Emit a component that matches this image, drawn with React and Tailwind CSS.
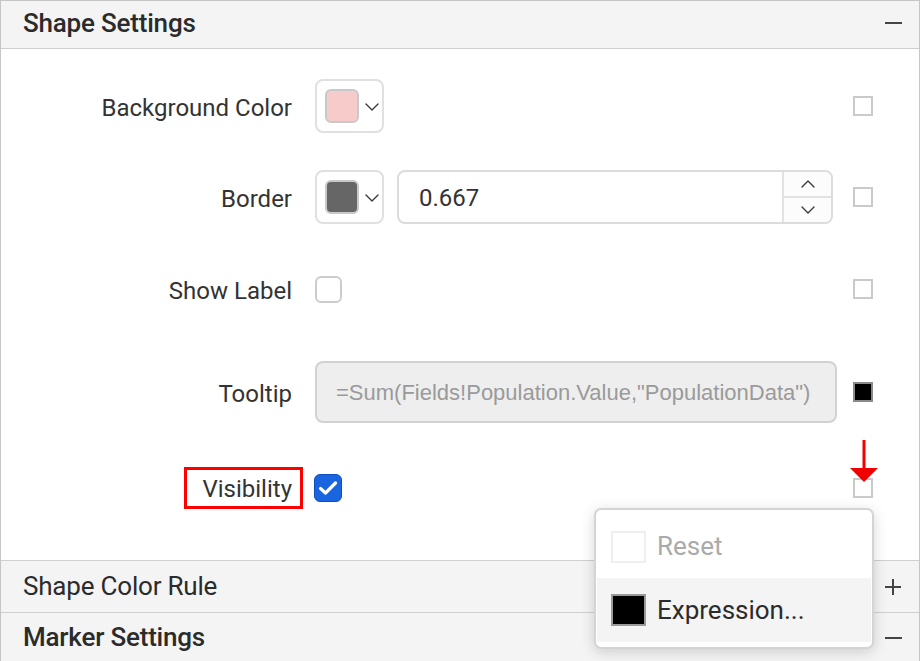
import React from "react";

const Chevron = ({ up = false, className = "" }) => (
  <svg width="14" height="8" viewBox="0 0 14 8" className={className} fill="none">
    <path
      d={up ? "M1 7L7 1L13 7" : "M1 1L7 7L13 1"}
      stroke="#3a3a3a"
      strokeWidth="1.4"
      strokeLinecap="round"
      strokeLinejoin="round"
    />
  </svg>
);

function ColorButton({ color }) {
  return (
    <div className="w-[69px] h-[54px] border-2 border-[#e0e0e0] rounded-[8px] flex items-center pl-[8px] bg-white">
      <div
        className="w-[34px] h-[34px] rounded-[6px] border-2 border-[#c9c9c9]"
        style={{ backgroundColor: color }}
      />
      <Chevron className="ml-[6px] mt-[2px]" />
    </div>
  );
}

function SideBox({ filled = false }) {
  return (
    <div
      className={
        filled
          ? "w-[20px] h-[20px] border-2 border-[#8a8a8a] bg-black"
          : "w-[20px] h-[20px] border-2 border-[#cacaca] bg-white"
      }
    />
  );
}

function Row({ label, height, mt, children, side, labelNode }) {
  return (
    <div className="flex items-center" style={{ height, marginTop: mt }}>
      <div className="w-[291px] flex justify-end text-[24px] text-[#333] pt-[3px]">
        {labelNode || <span>{label}</span>}
      </div>
      <div className="w-[522px] ml-[23px] flex items-center">{children}</div>
      <div className="ml-[16px]">{side}</div>
    </div>
  );
}

function Header({ title, bold, icon, className = "" }) {
  return (
    <div className={`flex items-center justify-between bg-[#f4f4f4] pl-[22px] pr-[17px] ${className}`}>
      <span className={`text-[26px] text-[#2b2b2b] tracking-[-0.2px] ${bold ? "font-medium" : ""}`}>{title}</span>
      {icon === "minus" ? (
        <div className="w-[17px] h-[2px] bg-[#444]" />
      ) : (
        <svg width="18" height="18" viewBox="0 0 18 18">
          <path d="M9 1V17M1 9H17" stroke="#444" strokeWidth="2" />
        </svg>
      )}
    </div>
  );
}

export default function App() {
  return (
    <div
      className="relative w-[920px] h-[661px] overflow-hidden bg-white border-t border-x border-[#c6c6c6]"
      style={{ fontFamily: "Roboto, 'Open Sans', sans-serif" }}
    >
      <Header title="Shape Settings" bold icon="minus" className="h-[48px] pb-[3px] border-b border-[#d0d0d0]" />

      {/* body */}
      <div className="h-[511px] pt-[30px]">
        <Row label="Background Color" height={54} mt={0} side={<SideBox />}>
          <ColorButton color="#f8cbcb" />
        </Row>

        <Row label="Border" height={54} mt={37} side={<SideBox />}>
          <ColorButton color="#666666" />
          <div className="ml-[13px] w-[436px] h-[54px] border-2 border-[#dcdcdc] rounded-[8px] flex overflow-hidden">
            <div className="flex-1 flex items-center pl-[20px] pt-[2px] text-[24px] text-[#333]">0.667</div>
            <div className="w-[49px] border-l-2 border-[#e2e2e2] flex flex-col bg-[#fcfcfc]">
              <div className="flex-1 flex items-center justify-center border-b-2 border-[#e2e2e2]">
                <Chevron up />
              </div>
              <div className="flex-1 flex items-center justify-center">
                <Chevron />
              </div>
            </div>
          </div>
        </Row>

        <Row label="Show Label" height={54} mt={38} side={<SideBox />}>
          <div className="w-[27px] h-[27px] rounded-[6px] border-2 border-[#cccccc] bg-white" />
        </Row>

        <Row label="Tooltip" height={62} mt={45} side={<SideBox filled />}>
          <div
            className="w-[522px] h-[62px] bg-[#eeeeee] border-2 border-[#d2d2d2] rounded-[8px] flex items-center pl-[19px] text-[22px] text-[#9a9a9a]"
            style={{ fontFamily: "'Liberation Sans', Arial, sans-serif" }}
          >
            =Sum(Fields!Population.Value,"PopulationData")
          </div>
        </Row>

        <Row
          height={54}
          mt={38}
          side={<SideBox />}
          labelNode={
            <span className="h-[42px] flex items-center border-[3px] border-[#ff0000] pl-[15px] pr-[8px] mr-[-11px] ml-[-1px] mt-[-3px] pt-[2px]">
              Visibility
            </span>
          }
        >
          <div className="w-[28px] h-[28px] rounded-[6px] bg-[#1a64e0] border border-[#0f4fbf] flex items-center justify-center ml-[-1px]">
            <svg width="20" height="16" viewBox="0 0 20 16" fill="none">
              <path d="M2.5 8.5L7.5 13L17.5 3" stroke="white" strokeWidth="3.2" strokeLinecap="round" strokeLinejoin="round" />
            </svg>
          </div>
        </Row>
      </div>

      <Header title="Shape Color Rule" icon="plus" className="h-[52px] border-t border-[#d0d0d0]" />
      <Header title="Marker Settings" bold icon="minus" className="h-[50px] border-t border-[#d0d0d0]" />

      {/* red arrow */}
      <svg className="absolute left-[848px] top-[439px]" width="30" height="43" viewBox="0 0 30 43">
        <path d="M15 0V30" stroke="#f00000" strokeWidth="3" />
        <path d="M1 28H29L15 42Z" fill="#f00000" />
      </svg>

      {/* context menu */}
      <div className="absolute left-[593px] top-[507px] w-[280px] h-[141px] bg-white border-2 border-[#d4d4d4] rounded-[7px] shadow-[0_3px_14px_rgba(0,0,0,0.16)] px-[1px] py-[5px] flex flex-col">
        <div className="h-[64px] flex items-center pl-[14px]">
          <div className="w-[35px] h-[32px] border-2 border-[#efefef] bg-white" />
          <span className="ml-[11px] text-[26px] text-[#aaaaaa]">Reset</span>
        </div>
        <div className="h-[65px] flex items-center pl-[14px] bg-[#f4f4f4]">
          <div className="w-[35px] h-[32px] border-2 border-[#9a9a9a] bg-black" />
          <span className="ml-[11px] text-[26px] text-[#2b2b2b]">Expression...</span>
        </div>
      </div>
    </div>
  );
}
